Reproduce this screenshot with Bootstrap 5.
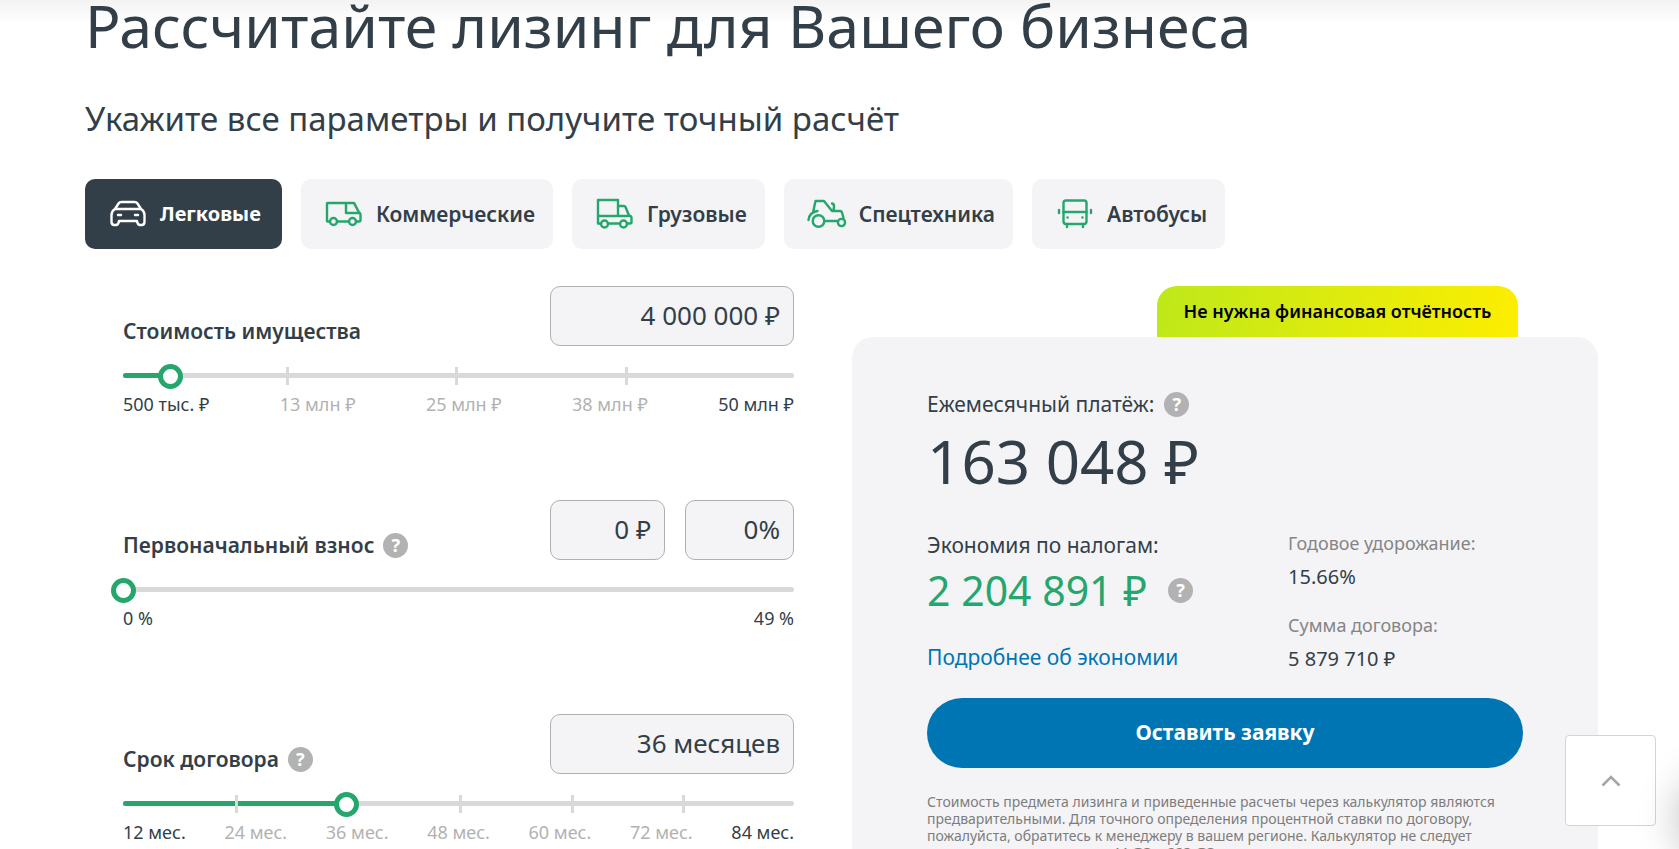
<!DOCTYPE html>
<html lang="ru">
<head>
<meta charset="utf-8">
<meta name="viewport" content="width=device-width, initial-scale=1">
<title>Лизинговый калькулятор</title>
<link href="https://cdn.jsdelivr.net/npm/bootstrap@5.3.0/dist/css/bootstrap.min.css" rel="stylesheet">
<style>
:root{--ink:#333f48;--green:#24a66c;--soft:#f4f4f7;--muted:#b2b2b2;--blue:#0075b4}
body{font-family:"Noto Sans","Open Sans",sans-serif;color:var(--ink);font-size:21px;line-height:28px;background:#fff}
.top-shade{height:24px;background:linear-gradient(#f3f3f3,rgba(255,255,255,0));z-index:1;pointer-events:none}
.page{padding:0 81px 0 85px}
.page-title{font-size:59px;line-height:50px;font-weight:400;margin:0;position:relative;z-index:2}
.page-lead{font-size:33px;line-height:44px;margin:47px 0 0}
.tab-row{gap:19px;margin-top:38px}
.tab-btn{height:70px;border:0;border-radius:10px;background:var(--soft);color:var(--ink);font-weight:600;font-size:21px;padding:0 18px 0 23px;gap:12px}
.tab-btn svg{width:40px;height:36px;color:var(--green);fill:none;stroke:currentColor;stroke-width:2.400;stroke-linejoin:round;stroke-linecap:round}
.tab-btn.active{background:var(--ink);color:#fff;font-weight:700;font-size:20px;padding-right:21px}
.tab-btn.active svg{color:#fff}
.calc{margin-top:37px}
.calc-form{width:50.7%;padding:0 58px 0 38px}
.calc-result{width:49.3%}
.param{min-height:214px}
.param-label{font-weight:600;font-size:21px}
.param-head{height:60px}
.param-name{gap:9px;margin-bottom:1px}
.value-box{height:60px;border:1px solid #b0b0b2;border-radius:10px;background:var(--soft);color:var(--ink);text-align:right;font-size:26px;padding:0 13px 3px}
.value-box.wide{width:244px}
.value-box.mid{width:115px}
.value-box.slim{width:109px}
.help{width:25px;height:25px;border:0;border-radius:50%;background:var(--muted);color:#fff;font-size:18px;line-height:25px;font-weight:700;padding:0;flex:none}
.slide{height:25px;margin-top:17px;position:relative}
.slide-bar,.slide-fill{height:5px;border-radius:3px;position:absolute;left:0;top:10px}
.slide-bar{width:100%;background:#d9d9d9}
.slide-fill{background:var(--green)}
.tick{width:3px;height:18px;background:#d9d9d9;position:absolute;top:4px}
.slide input{-webkit-appearance:none;appearance:none;background:none;position:absolute;left:-12px;top:1px;width:calc(100% + 24px);height:25px;margin:0}
.slide input::-webkit-slider-runnable-track{background:none;height:25px}
.slide input::-webkit-slider-thumb{-webkit-appearance:none;width:25px;height:25px;border:5px solid var(--green);border-radius:50%;background:#fff}
.slide input::-moz-range-thumb{width:15px;height:15px;border:5px solid var(--green);border-radius:50%;background:#fff}
.scale{font-size:18px;line-height:24px;margin-top:4px;color:var(--muted)}
.scale span:first-child,.scale span:last-child{color:var(--ink)}
.promo{width:361px;height:51px;padding-bottom:2px;margin-right:80px;border-radius:20px 20px 0 0;background:linear-gradient(100deg,#bee81a,#fdee00);color:#000;font-weight:600;font-size:18px}
.result{background:var(--soft);border-radius:21px;padding:53px 75px 60px}
.sum-label{gap:10px}
.sum-main{font-size:60px;line-height:80px;margin-top:3px}
.sums{margin-top:30px}
.col-tax{width:361px}
.sum-tax{font-size:41px;line-height:52px;color:var(--green);gap:21px;margin-top:5px}
.more{color:var(--blue);text-decoration:none;margin-top:27px}
.facts{font-size:18px;line-height:24px}
.facts dt{font-weight:400;color:#858585}
.facts dd{font-size:20px;margin:10px 0 24px}
.apply{height:70px;border-radius:35px;background:var(--blue);color:#fff;font-weight:700;font-size:21px;margin-top:27px}
.note{font-size:14px;line-height:17px;color:#7d7d7d;margin-top:25px}
.to-top{right:23px;bottom:23px;width:91px;height:91px;border:1px solid #d4d4d4;border-radius:4px;background:#fff;z-index:3}
.edge-glow{right:-60px;bottom:-10px;width:60px;height:80px;border-radius:40px;box-shadow:0 0 40px rgba(0,0,0,.25);z-index:4}
</style>
</head>
<body>
<div class="top-shade fixed-top"></div>
<main class="page">
  <h1 class="page-title">Рассчитайте лизинг для Вашего бизнеса</h1>
  <p class="page-lead">Укажите все параметры и получите точный расчёт</p>

  <div class="tab-row d-flex flex-wrap" role="group" aria-label="Тип имущества">
    <button type="button" class="tab-btn active d-flex align-items-center">
      <svg viewBox="0 0 40 36"><path d="M7 13 10.500 7.500Q11.500 6 13.500 6h13q2 0 3 1.500L33 13M7 13h26q3.500 2 3.500 6v7q0 3-3 3h-1.500q-2.500 0-3-4h-18q-.5 4-3 4H6.500q-3 0-3-3v-7q0-4 3.500-6ZM10 19h3M27 19h3"/></svg>
      Легковые</button>
    <button type="button" class="tab-btn d-flex align-items-center">
      <svg viewBox="0 0 40 36"><path d="M6 25.500H3.500q-.5 0-.5-.5V7.500q0-.5.5-.5h26q.6 0 .9.600L35 16.500q1.500.5 1.500 2V24q0 1.500-1.500 1.500h-3M13 25.500h12M22 7v10h13"/><circle cx="9.500" cy="25.500" r="3.500"/><circle cx="28.500" cy="25.500" r="3.500"/></svg>
      Коммерческие</button>
    <button type="button" class="tab-btn d-flex align-items-center">
      <svg viewBox="0 0 40 36"><path d="M6 27.500H3V4h20v16M3 20h30M23 10h6q1 0 1.500 1L34 19.500q2.500.5 2.500 2.500v4q0 1.500-1.500 1.500h-3M13 27.500h12"/><circle cx="9.500" cy="28" r="3.500"/><circle cx="28.500" cy="28" r="3.500"/></svg>
      Грузовые</button>
    <button type="button" class="tab-btn d-flex align-items-center">
      <svg viewBox="0 0 40 36"><path d="M1.500 24q.5-7.500 9-9M6 16.500 8.500 5H17l8 10h8q1.500 0 2 1.500L36.500 22M25 7.500q2.500.5 2 3.500l-.5 4M17.500 25H30"/><circle cx="11.500" cy="25" r="5.800"/><circle cx="34.500" cy="26.500" r="3.600"/></svg>
      Спецтехника</button>
    <button type="button" class="tab-btn d-flex align-items-center">
      <svg viewBox="0 0 40 36"><rect x="8.500" y="4.500" width="23" height="23.500" rx="2.500"/><path d="M8.500 16h23M12 28v3M28 28v3M4 14v3M36 14v3M12.500 21.500h.1M27.400 21.500h.1"/></svg>
      Автобусы</button>
  </div>

  <div class="calc d-flex">
    <form class="calc-form">
      <div class="param">
        <div class="param-head d-flex justify-content-between align-items-end">
          <div class="param-name d-flex align-items-center"><label class="param-label" for="cost">Стоимость имущества</label></div>
          <input id="cost" class="value-box wide" type="text" value="4 000 000 ₽">
        </div>
        <div class="slide">
          <div class="slide-bar"></div><div class="slide-fill" style="width:7%"></div>
          <i class="tick" style="left:24.3%"></i><i class="tick" style="left:49.5%"></i><i class="tick" style="left:74.8%"></i>
          <input type="range" min="500" max="50000" step="100" value="4000" aria-label="Стоимость имущества">
        </div>
        <div class="scale d-flex justify-content-between"><span>500 тыс. ₽</span><span>13 млн ₽</span><span>25 млн ₽</span><span>38 млн ₽</span><span>50 млн ₽</span></div>
      </div>
      <div class="param">
        <div class="param-head d-flex justify-content-between align-items-end">
          <div class="param-name d-flex align-items-center"><label class="param-label" for="advance">Первоначальный взнос</label><button type="button" class="help" aria-label="Справка о взносе">?</button></div>
          <div class="d-flex"><input id="advance" class="value-box mid me-3" type="text" value="0 ₽"><input class="value-box slim ms-1" type="text" value="0%" aria-label="Взнос в процентах"></div>
        </div>
        <div class="slide">
          <div class="slide-bar"></div>
          <input type="range" min="0" max="49" value="0" aria-label="Первоначальный взнос">
        </div>
        <div class="scale d-flex justify-content-between"><span>0 %</span><span>49 %</span></div>
      </div>
      <div class="param">
        <div class="param-head d-flex justify-content-between align-items-end">
          <div class="param-name d-flex align-items-center"><label class="param-label" for="term">Срок договора</label><button type="button" class="help" aria-label="Справка о сроке">?</button></div>
          <input id="term" class="value-box wide" type="text" value="36 месяцев">
        </div>
        <div class="slide">
          <div class="slide-bar"></div><div class="slide-fill" style="width:33.3%"></div>
          <i class="tick" style="left:16.7%"></i><i class="tick" style="left:50%"></i><i class="tick" style="left:66.7%"></i><i class="tick" style="left:83.3%"></i>
          <input type="range" min="12" max="84" value="36" aria-label="Срок договора">
        </div>
        <div class="scale d-flex justify-content-between"><span>12 мес.</span><span>24 мес.</span><span>36 мес.</span><span>48 мес.</span><span>60 мес.</span><span>72 мес.</span><span>84 мес.</span></div>
      </div>
    </form>

    <section class="calc-result">
      <div class="promo ms-auto d-flex align-items-center justify-content-center">Не нужна финансовая отчётность</div>
      <div class="result">
        <div class="sum-label d-flex align-items-center">Ежемесячный платёж: <button type="button" class="help" aria-label="Справка о платеже">?</button></div>
        <div class="sum-main">163 048 ₽</div>
        <div class="sums d-flex">
          <div class="col-tax d-flex flex-column align-items-start">
            <div>Экономия по налогам:</div>
            <div class="sum-tax d-flex align-items-center">2 204 891 ₽ <button type="button" class="help" aria-label="Справка об экономии">?</button></div>
            <a href="#" class="more">Подробнее об экономии</a>
          </div>
          <dl class="facts mb-0">
            <dt>Годовое удорожание:</dt><dd>15.66%</dd>
            <dt>Сумма договора:</dt><dd class="mb-0">5 879 710 ₽</dd>
          </dl>
        </div>
        <button type="button" class="btn apply w-100">Оставить заявку</button>
        <p class="note mb-0">Стоимость предмета лизинга и приведенные расчеты через калькулятор являются предварительными. Для точного определения процентной ставки по договору, пожалуйста, обратитесь к менеджеру в вашем регионе. Калькулятор не следует применять для закупок по 44-ФЗ и 223-ФЗ.</p>
      </div>
    </section>
  </div>
</main>
<button type="button" class="to-top position-fixed d-flex align-items-center justify-content-center p-0" aria-label="Наверх">
  <svg width="20" height="12" viewBox="0 0 20 12" fill="none" stroke="#a6a6a6" stroke-width="2.600"><path d="M1.500 10.500 10 2l8.500 8.500"/></svg>
</button>
<div class="edge-glow position-fixed"></div>
<script src="https://cdn.jsdelivr.net/npm/bootstrap@5.3.0/dist/js/bootstrap.bundle.min.js"></script>
</body>
</html>
